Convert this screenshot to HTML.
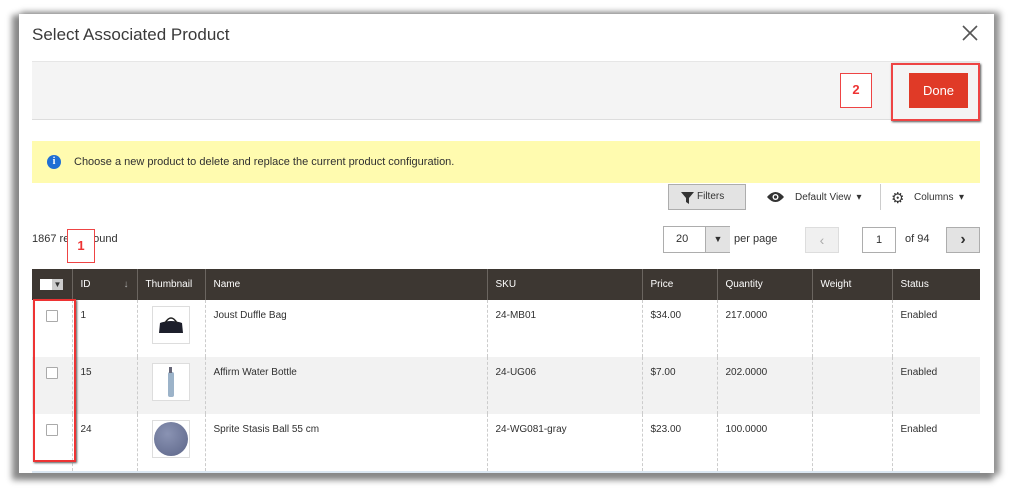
<!DOCTYPE html><html><head><style>
*{box-sizing:border-box;margin:0;padding:0}
body{width:1013px;height:488px;background:#fff;font-family:"Liberation Sans",sans-serif;position:relative;overflow:hidden;color:#303030}
.modal{position:absolute;left:19px;top:14px;width:975px;height:459px;background:#fff;box-shadow:-4px 4px 6px 3px #888,4px 0 6px 2px #999}
.a{position:absolute}
.t{font-size:11px;color:#303030}
th,td{font-size:10px}
table{border-collapse:collapse;position:absolute;left:13px;top:255px;width:948px;table-layout:fixed}
th{background:#3d3732;color:#fff;font-weight:normal;text-align:left;height:31px;padding:0 8px;border-left:1px solid #6b6560}
td{vertical-align:top;padding:10px 8px 8px;height:57px;border-left:1px dashed #ccc}
tr.g td{background:#f2f2f2}
.cb{width:12px;height:12px;border:1px solid #aaa;background:#fff;border-radius:1px;margin:0 0 0 6px}
.th{width:38px;height:38px;border:1px solid #ddd;background:#fff;margin:-4px auto 0;display:flex;align-items:center;justify-content:center}
</style></head><body>
<div class="modal">
<div class="a" style="left:13px;top:11px;font-size:17px;color:#3a3a3a">Select Associated Product</div>
<svg class="a" style="left:943px;top:11px" width="16" height="16"><path d="M1 1L15 15M15 1L1 15" stroke="#555" stroke-width="1.6"/></svg>
<div class="a" style="left:13px;top:47px;width:948px;height:59px;background:#f4f4f4;border-top:1px solid #e6e6e6;border-bottom:1px solid #ddd"></div>
<div class="a" style="left:821px;top:59px;width:32px;height:35px;border:1.5px solid #e44;background:#fff;color:#e33;font-weight:bold;font-size:13px;text-align:center;line-height:32px">2</div>
<div class="a" style="left:872px;top:49px;width:89px;height:58px;border:2px solid #e44;box-shadow:1px 1px 2px #555"></div>
<div class="a" style="left:890px;top:59px;width:59px;height:35px;background:#e03a27;color:#fff;font-size:13px;text-align:center;line-height:35px">Done</div>
<div class="a" style="left:13px;top:127px;width:948px;height:42px;background:#fffbaf"></div>
<div class="a" style="left:28px;top:141px;width:14px;height:14px;border-radius:50%;background:#1f6ed4;color:#fff;font-size:10px;font-weight:bold;text-align:center;line-height:14px;font-family:'Liberation Serif',serif">i</div>
<div class="a t" style="left:55px;top:142px">Choose a new product to delete and replace the current product configuration.</div>
<div class="a" style="left:649px;top:170px;width:78px;height:26px;background:#e3e3e3;border:1px solid #adadad;font-size:10px;color:#333;line-height:24px;padding-left:28px">Filters</div>
<svg class="a" style="left:662px;top:177px" width="13" height="13"><path d="M0 1H13L8 7V13L5 11V7Z" fill="#333"/></svg>
<svg class="a" style="left:747px;top:177px" width="19" height="12"><path d="M1 6Q9.5-4 18 6Q9.5 16 1 6Z" fill="#333"/><circle cx="9.5" cy="6" r="3" fill="#fff"/><circle cx="9.5" cy="6" r="1.6" fill="#333"/></svg>
<div class="a" style="left:776px;top:178px;font-size:10px;color:#333">Default View &nbsp;▾</div>
<div class="a" style="left:861px;top:170px;width:1px;height:26px;background:#ccc"></div>
<div class="a" style="left:872px;top:175px;font-size:15px;color:#333">⚙</div>
<div class="a" style="left:895px;top:178px;font-size:10px;color:#333">Columns &nbsp;▾</div>
<div class="a t" style="left:13px;top:219px">1867 re&nbsp;&nbsp;&nbsp;&nbsp;s found</div>
<div class="a" style="left:48px;top:215px;width:28px;height:34px;border:1.5px solid #e44;background:#fff;color:#e33;font-weight:bold;font-size:13px;text-align:center;line-height:32px">1</div>
<div class="a" style="left:644px;top:212px;width:67px;height:27px;border:1px solid #adadad;background:#fff;font-size:11px;line-height:25px;padding-left:12px">20</div>
<div class="a" style="left:686px;top:213px;width:25px;height:25px;background:#e3e3e3;border-left:1px solid #adadad;font-size:9px;text-align:center;line-height:25px">▼</div>
<div class="a t" style="left:715px;top:219px">per page</div>
<div class="a" style="left:786px;top:213px;width:34px;height:26px;background:#f0f0f0;border:1px solid #ddd;color:#aaa;text-align:center;line-height:24px;font-size:14px">‹</div>
<div class="a" style="left:843px;top:213px;width:34px;height:26px;border:1px solid #adadad;text-align:center;line-height:24px;font-size:11px">1</div>
<div class="a t" style="left:886px;top:219px">of 94</div>
<div class="a" style="left:927px;top:213px;width:34px;height:26px;background:#e3e3e3;border:1px solid #adadad;text-align:center;line-height:23px;font-size:16px;font-weight:bold;color:#333">›</div>
<table>
<colgroup><col style="width:40px"><col style="width:65px"><col style="width:68px"><col style="width:282px"><col style="width:155px"><col style="width:75px"><col style="width:95px"><col style="width:80px"><col style="width:88px"></colgroup>
<tr><th style="border-left:none"><span style="display:inline-block;width:12px;height:11px;background:#fff;vertical-align:middle"></span><span style="display:inline-block;width:11px;height:11px;background:#ccc;color:#333;font-size:8px;text-align:center;line-height:11px;vertical-align:middle">▼</span></th><th>ID<span style="float:right;color:#aaa">↓</span></th><th>Thumbnail</th><th>Name</th><th>SKU</th><th>Price</th><th>Quantity</th><th>Weight</th><th>Status</th></tr>
<tr><td style="border-left:none"><div class="cb"></div></td><td>1</td><td><div class="th"><svg width="30" height="20"><path d="M4 8Q15 4 26 8L27 18H3Z" fill="#1d1f2b"/><path d="M9 8Q15-2 21 8" stroke="#222" fill="none" stroke-width="1.5"/></svg></div></td><td>Joust Duffle Bag</td><td>24-MB01</td><td>$34.00</td><td>217.0000</td><td></td><td>Enabled</td></tr>
<tr class="g"><td style="border-left:none"><div class="cb"></div></td><td>15</td><td><div class="th"><svg width="10" height="32"><rect x="2" y="6" width="6" height="25" rx="2" fill="#9cb3c9"/><rect x="3" y="1" width="3" height="6" fill="#667"/></svg></div></td><td>Affirm Water Bottle</td><td>24-UG06</td><td>$7.00</td><td>202.0000</td><td></td><td>Enabled</td></tr>
<tr><td style="border-left:none"><div class="cb"></div></td><td>24</td><td><div class="th"><div style="width:34px;height:34px;border-radius:50%;background:radial-gradient(circle at 40% 35%,#8a93b3,#5c6588)"></div></div></td><td>Sprite Stasis Ball 55 cm</td><td>24-WG081-gray</td><td>$23.00</td><td>100.0000</td><td></td><td>Enabled</td></tr>
</table>
<div class="a" style="left:13px;top:457px;width:948px;height:2px;background:#dbe7f2"></div>
<div class="a" style="left:14px;top:285px;width:43px;height:163px;border:2.5px solid #e33;box-shadow:1px 1px 2px #555"></div>
</div>
</body></html>
